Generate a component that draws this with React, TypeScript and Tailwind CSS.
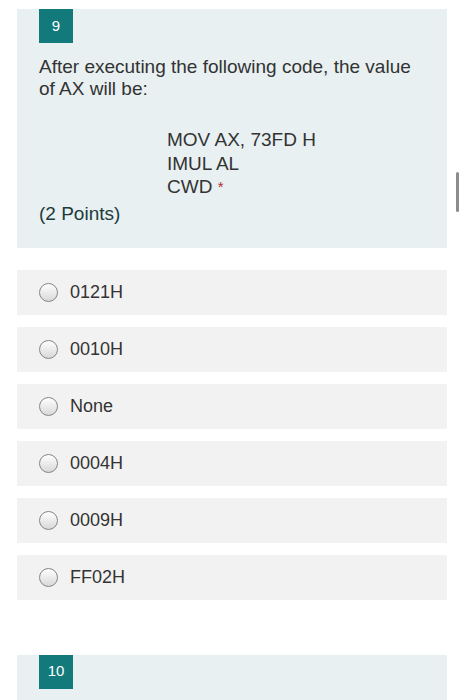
import React from 'react';

const options = ['0121H', '0010H', 'None', '0004H', '0009H', 'FF02H'];

const Radio: React.FC = () => (
  <span className="w-[19px] h-[19px] rounded-full border border-[#858585] bg-gradient-to-b from-[#ffffff] to-[#d8d8d8] shrink-0" />
);

export default function App() {
  return (
    <div
      className="relative w-[464px] h-[700px] overflow-hidden bg-white text-[#333333]"
      style={{ fontFamily: '"Liberation Sans", Arial, sans-serif' }}
    >
      <div className="mx-[17px] mt-[9px] bg-[#e8f0f2] pl-[22px] pr-4 pb-[23px]">
        <div className="w-[34px] h-[34px] bg-[#137a7b] text-white text-[15px] flex items-center justify-center">
          9
        </div>
        <p className="mt-[13px] text-[19px] leading-[22px]">
          After executing the following code, the value of AX will be:
        </p>
        <div className="mt-[28px] ml-[128px] text-[19px] leading-[23.5px]">
          <div>MOV AX, 73FD H</div>
          <div>IMUL AL</div>
          <div>
            CWD <span className="text-[#b32d2e] text-[15px] align-top">*</span>
          </div>
        </div>
        <div className="mt-[3px] text-[19px] leading-[23px] text-[#213a3a]">(2 Points)</div>
      </div>

      <div className="mx-[17px] mt-[22px] flex flex-col gap-[12px]">
        {options.map((opt) => (
          <div key={opt} className="h-[45px] bg-[#f2f2f2] flex items-center gap-[12px] pl-[22px]">
            <Radio />
            <span className="text-[18px]">{opt}</span>
          </div>
        ))}
      </div>

      <div className="mx-[17px] mt-[55px] bg-[#e8f0f2] pl-[22px] h-[60px]">
        <div className="w-[34px] h-[34px] bg-[#137a7b] text-white text-[15px] flex items-center justify-center">
          10
        </div>
      </div>

      <div className="absolute left-[456px] top-[172px] w-[3px] h-[40px] rounded-full bg-[#8c8c8c]" />
    </div>
  );
}
